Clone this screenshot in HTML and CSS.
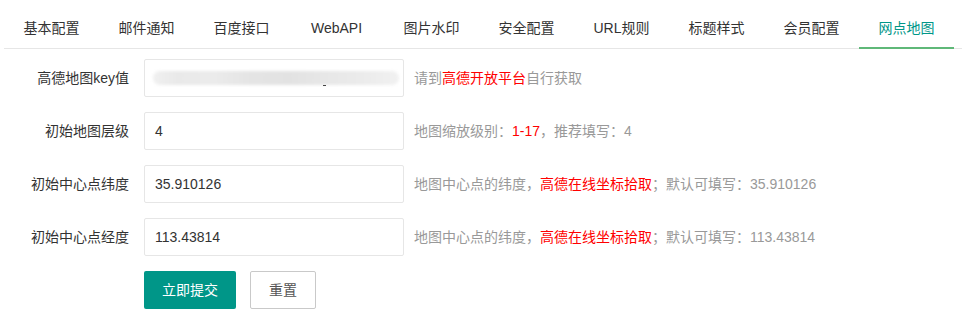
FILE: index.html
```html
<!DOCTYPE html>
<html lang="zh-CN">
<head>
<meta charset="utf-8">
<link rel="stylesheet" href="styles.css">
</head>
<body>
<div class="page">
  <ul class="tab-title">
    <li>基本配置</li>
    <li>邮件通知</li>
    <li>百度接口</li>
    <li>WebAPI</li>
    <li>图片水印</li>
    <li>安全配置</li>
    <li>URL规则</li>
    <li>标题样式</li>
    <li>会员配置</li>
    <li class="active">网点地图</li>
  </ul>
  <div class="tab-content">
    <div class="form-item">
      <label class="form-label">高德地图key值</label>
      <div class="input-inline">
        <div class="input masked"><span class="blur"></span><span class="dot"></span></div>
      </div>
      <div class="form-mid">请到<span class="red">高德开放平台</span>自行获取</div>
    </div>
    <div class="form-item">
      <label class="form-label">初始地图层级</label>
      <div class="input-inline"><div class="input">4</div></div>
      <div class="form-mid">地图缩放级别：<span class="red">1-17</span>，推荐填写：4</div>
    </div>
    <div class="form-item">
      <label class="form-label">初始中心点纬度</label>
      <div class="input-inline"><div class="input">35.910126</div></div>
      <div class="form-mid">地图中心点的纬度，<span class="red">高德在线坐标拾取</span>；默认可填写：35.910126</div>
    </div>
    <div class="form-item">
      <label class="form-label">初始中心点经度</label>
      <div class="input-inline"><div class="input">113.43814</div></div>
      <div class="form-mid">地图中心点的纬度，<span class="red">高德在线坐标拾取</span>；默认可填写：113.43814</div>
    </div>
    <div class="form-item buttons">
      <button class="btn">立即提交</button>
      <button class="btn btn-primary">重置</button>
    </div>
  </div>
</div>
</body>
</html>
```

FILE: styles.css
```css
* { box-sizing: border-box; }
html, body { margin: 0; padding: 0; background: #fff; }
body {
  font-family: "Liberation Sans", "Noto Sans CJK SC", sans-serif;
  font-size: 14px;
  color: #333;
}
.page { padding: 8px 3px 0 4px; }
.tab-title {
  list-style: none;
  margin: 0;
  padding: 0;
  height: 41px;
  display: flex;
  border-bottom: 1px solid #e6e6e6;
}
.tab-title li {
  width: 95px;
  height: 40px;
  line-height: 40px;
  text-align: center;
  color: #333;
  white-space: nowrap;
}
.tab-title li.active {
  color: #009688;
  border-bottom: 2px solid #5fb878;
  height: 41px;
  margin-bottom: -1px;
}
.tab-content { padding-top: 10px; }
.form-item {
  display: flex;
  align-items: flex-start;
  margin-bottom: 15px;
}
.form-label {
  width: 140px;
  padding: 9px 15px;
  line-height: 20px;
  text-align: right;
  color: #333;
  white-space: nowrap;
}
.input-inline { width: 260px; margin-right: 10px; }
.input {
  position: relative;
  height: 38px;
  line-height: 36px;
  border: 1px solid #e6e6e6;
  border-radius: 2px;
  padding-left: 10px;
  color: #333;
  background: #fff;
}
.masked .blur {
  position: absolute;
  left: 8px;
  top: 11px;
  width: 246px;
  height: 14px;
  border-radius: 7px;
  background: linear-gradient(90deg, #f0f0f0 0%, #e9e9e9 10%, #ebebeb 25%, #e4e4e4 40%, #e2e2e2 55%, #e7e7e7 70%, #ebebeb 85%, #f1f1f1 100%);
  filter: blur(1.5px);
}
.masked .dot {
  position: absolute;
  left: 178px;
  top: 25px;
  width: 3px;
  height: 1px;
  background: #444;
}
.form-mid {
  padding: 9px 0;
  line-height: 20px;
  color: #999;
  white-space: nowrap;
}
.red { color: #ff0000; }
.buttons { padding-left: 140px; gap: 14px; }
.btn {
  height: 38px;
  line-height: 38px;
  padding: 0 18px;
  border: none;
  border-radius: 2px;
  background: #009688;
  color: #fff;
  font-family: inherit;
  font-size: 14px;
  margin: 0;
  cursor: pointer;
}
.btn-primary {
  background: #fff;
  color: #555;
  border: 1px solid #c9c9c9;
  line-height: 36px;
}
```
